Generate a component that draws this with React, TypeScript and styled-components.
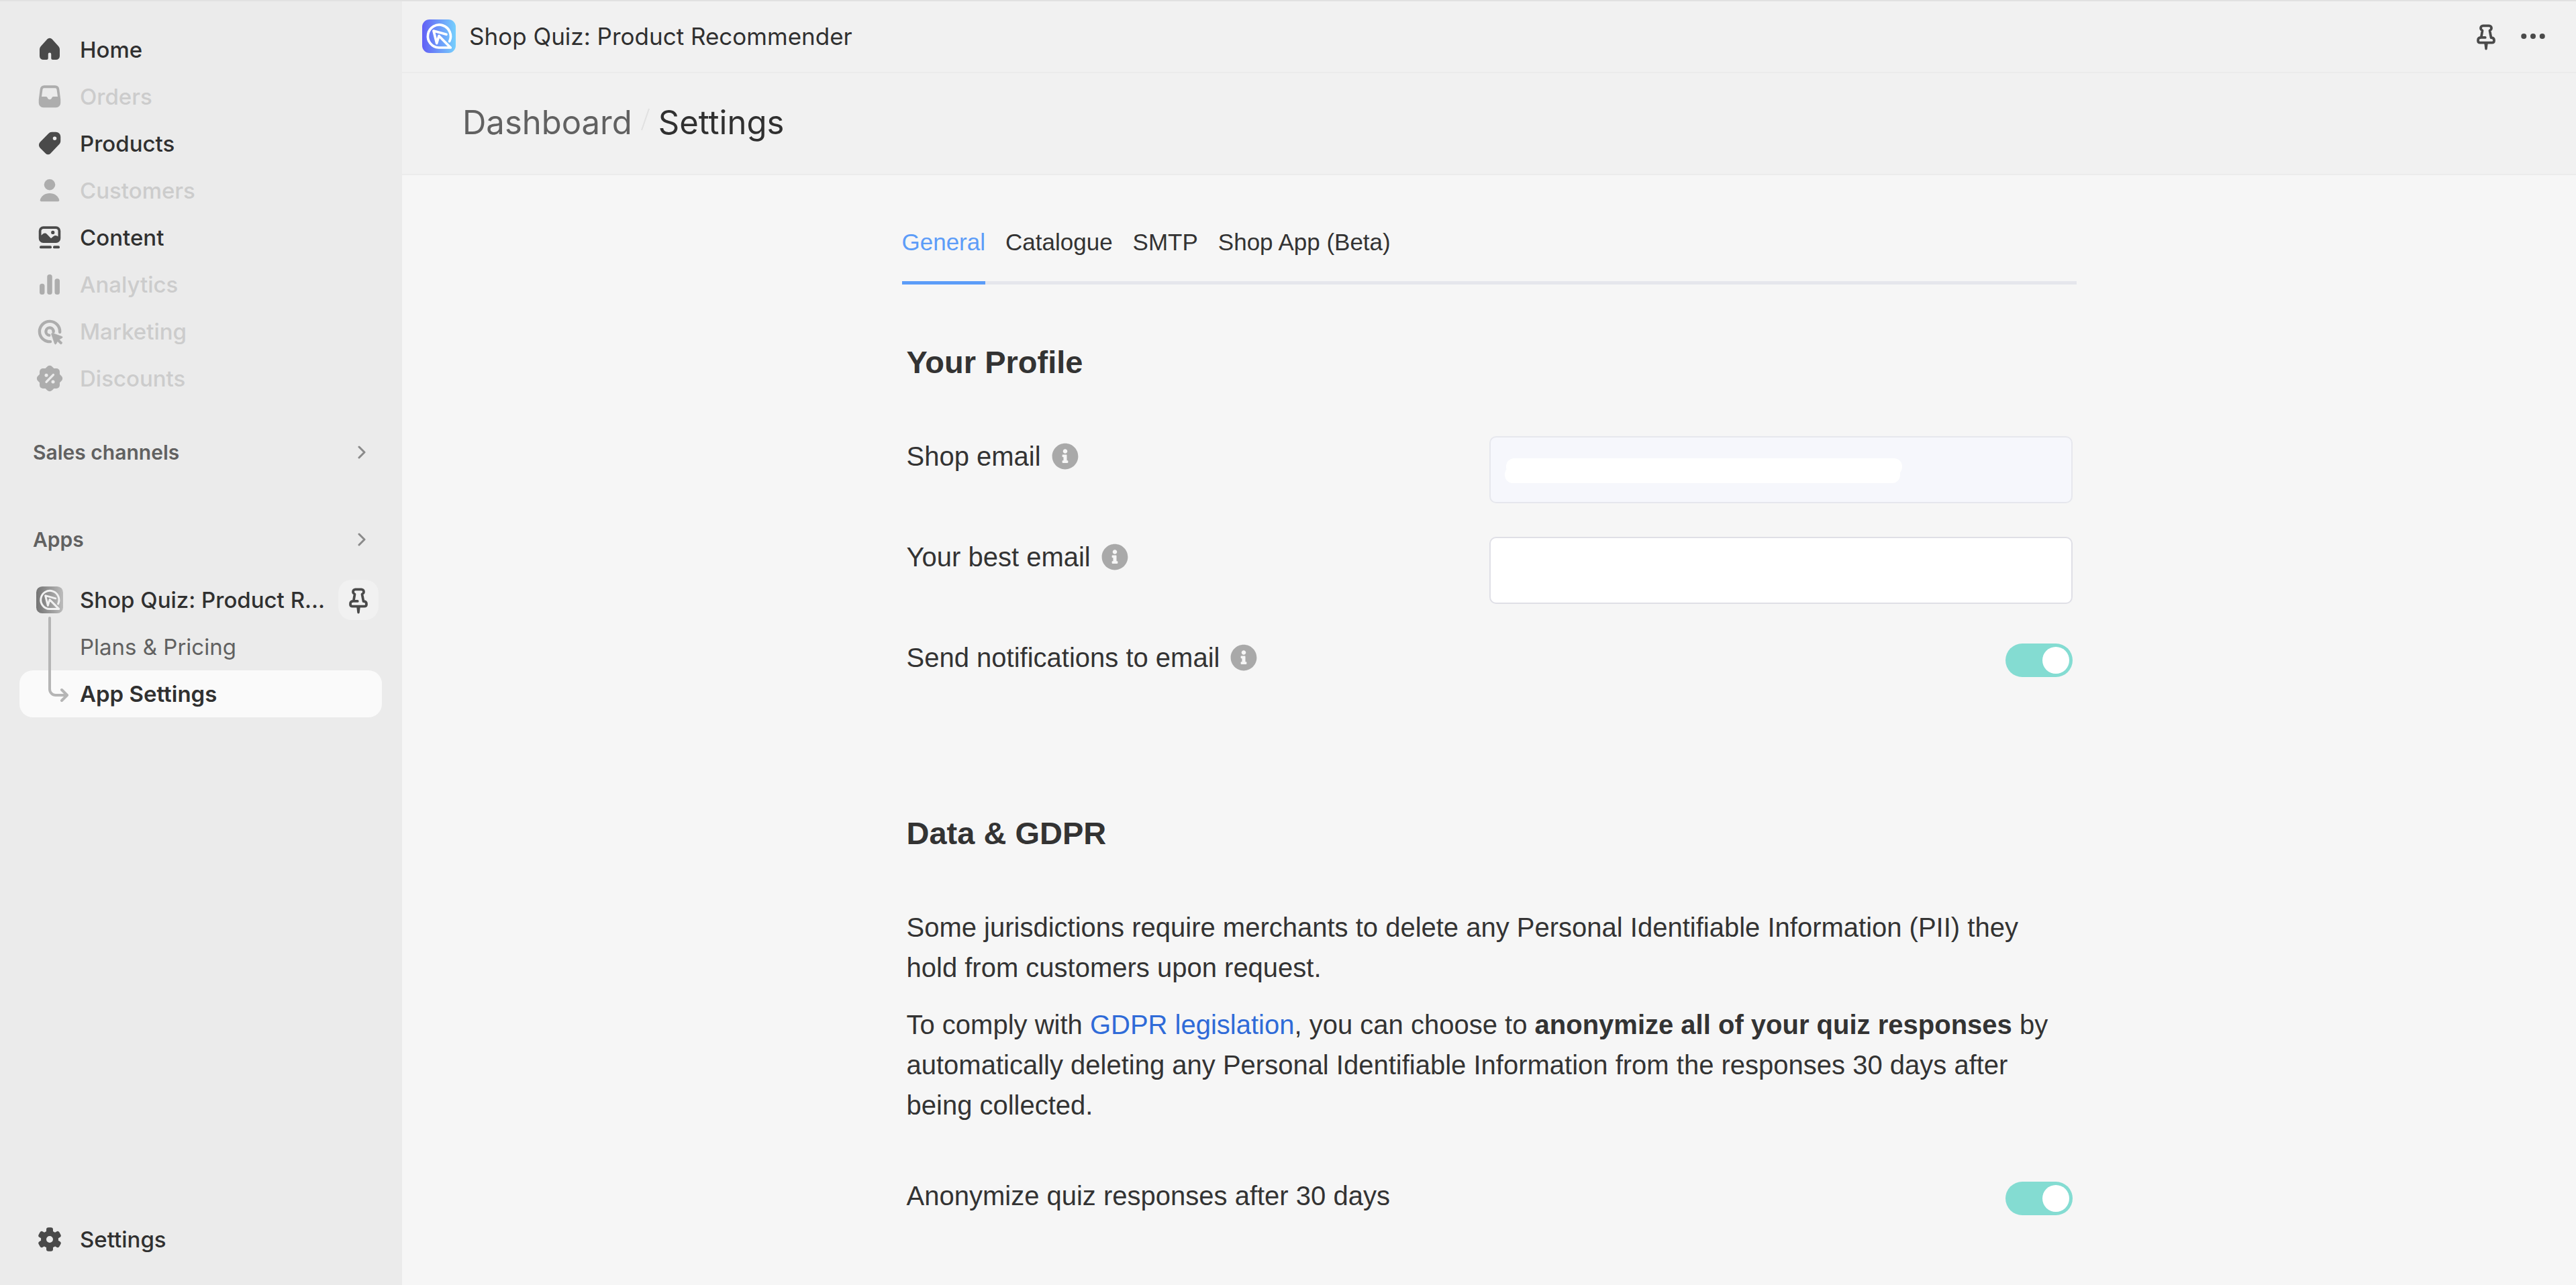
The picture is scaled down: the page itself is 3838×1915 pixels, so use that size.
import React, { useState } from "react";
import type { ReactNode } from "react";
import styled, { createGlobalStyle } from "styled-components";
import { FaInfoCircle } from "react-icons/fa";

const GlobalStyle = createGlobalStyle`
  *, *::before, *::after { box-sizing: border-box; }
  body { margin: 0; background: #f6f6f6; color: #303030; }
  a { text-decoration: none; }
  button { font: inherit; border: 0; background: none; padding: 0; cursor: pointer; }
`;

const ui = `Inter, "Noto Sans", sans-serif`;
const text = `"Liberation Sans", Arial, sans-serif`;

/* ---------- shell ---------- */

const Shell = styled.div`
  display: grid;
  grid-template-columns: 599px 1fr;
  min-height: 100vh;
  border-top: 2px solid #e1e1e1;
`;

const Sidebar = styled.aside`
  display: flex;
  flex-direction: column;
  padding: 37px 30px 33px 29px;
  background: #ebebeb;
  font-family: ${ui};
`;

const NavList = styled.ul<{ $top?: number }>`
  list-style: none;
  margin: ${(p) => p.$top ?? 0}px 0 0;
  padding: 0;
  position: relative;
`;

const NavRow = styled.li<{ $active?: boolean }>`
  display: flex;
  align-items: center;
  height: 70px;
  padding-left: 20px;
  padding-right: 5px;
  border-radius: 20px;
  background: ${(p) => (p.$active ? "#fafafa" : "transparent")};
`;

const NavLink = styled.a<{ $disabled?: boolean; $weight?: number; $indent?: boolean }>`
  display: flex;
  align-items: center;
  flex: 1;
  min-width: 0;
  gap: 20px;
  padding-left: ${(p) => (p.$indent ? 70 : 0)}px;
  color: ${(p) => (p.$disabled ? "#cccccc" : p.$weight === 400 ? "#616161" : "#303030")};
  font-size: 33px;
  font-weight: ${(p) => p.$weight ?? 500};
  line-height: 48px;
  white-space: nowrap;
  > svg {
    flex: none;
    color: ${(p) => (p.$disabled ? "#adadad" : "#4a4a4a")};
  }
`;

const SectionButton = styled.button<{ $top: number }>`
  display: flex;
  align-items: center;
  justify-content: space-between;
  height: 70px;
  margin-top: ${(p) => p.$top}px;
  padding: 0 24px 0 20px;
  color: #616161;
  font-size: 30px;
  font-weight: 600;
`;

const SidebarPin = styled.button`
  display: grid;
  place-items: center;
  flex: none;
  width: 60px;
  height: 60px;
  border-radius: 20px;
  background: #f1f1f1;
  color: #4a4a4a;
`;

const Branch = styled.svg`
  position: absolute;
  left: 40px;
  top: 59px;
  pointer-events: none;
`;

const SidebarFooter = styled.div`
  margin-top: auto;
`;

const Main = styled.main`
  min-width: 0;
`;

const TopBar = styled.header`
  display: flex;
  align-items: center;
  height: 107px;
  padding: 0 29px 2px 30px;
  border-bottom: 2px solid #ebebeb;
  background: #f1f1f1;
  font-family: ${ui};
`;

const AppTitle = styled.span`
  flex: 1;
  margin-left: 20px;
  font-size: 35px;
  font-weight: 400;
  line-height: 50px;
`;

const IconButton = styled.button`
  display: grid;
  place-items: center;
  width: 70px;
  height: 70px;
  color: #4a4a4a;
`;

const Crumbs = styled.nav`
  display: flex;
  align-items: center;
  gap: 13px;
  height: 152px;
  padding: 0 90px 2px;
  border-bottom: 2px solid #ebebeb;
  background: #f1f1f1;
  font-family: ${ui};
  font-size: 49px;
  line-height: 60px;
  font-weight: 400;
`;

const CrumbLink = styled.a`
  color: #616161;
`;

const CrumbCurrent = styled.span`
  color: #303030;
`;

/* ---------- settings page ---------- */

const Page = styled.div`
  max-width: 1750px;
  margin: 0 auto;
  padding: 70px 0 50px;
  color: #333333;
  font-family: ${text};
  font-size: 40px;
  line-height: 60px;
`;

const Tabs = styled.div`
  display: flex;
  gap: 30px;
  border-bottom: 5px solid #e5e6ec;
`;

const Tab = styled.button<{ $active: boolean }>`
  height: 93px;
  margin-bottom: -5px;
  padding-bottom: 28px;
  border-bottom: 5px solid ${(p) => (p.$active ? "#5c9cf8" : "transparent")};
  color: ${(p) => (p.$active ? "#5c9cf8" : "#333333")};
  font-size: 35px;
  line-height: 56px;
`;

const Section = styled.section<{ $top: number }>`
  padding: ${(p) => p.$top}px 6px 0 7px;
`;

const Heading = styled.h3`
  margin: 0 0 75px;
  font-size: 47px;
  font-weight: 700;
  line-height: 70px;
`;

const Field = styled.div`
  display: grid;
  grid-template-columns: 1fr 1fr;
  align-items: start;
  & + & {
    margin-top: 50px;
  }
`;

const LabelCell = styled.div`
  display: flex;
  align-items: center;
  gap: 16px;
  height: 60px;
`;

const InfoButton = styled.button`
  display: grid;
  place-items: center;
  color: #a9a9a9;
  font-size: 40px;
`;

const InputCell = styled.div`
  position: relative;
`;

const TextInput = styled.input`
  display: block;
  width: 100%;
  height: 100px;
  padding: 0 25px;
  border: 2px solid #dfdfe6;
  border-radius: 10px;
  background: #ffffff;
  color: #333333;
  font: 40px ${text};
  &:disabled {
    border-color: #e6e7ed;
    background: #f6f7fc;
  }
`;

const Redaction = styled.span`
  position: absolute;
  left: 23px;
  top: 33px;
  width: 592px;
  height: 37px;
  &::before,
  &::after {
    content: "";
    position: absolute;
    height: 25px;
    border-radius: 12px;
    background: #ffffff;
  }
  &::before { top: 0; left: 2px; right: 0; }
  &::after { bottom: 0; left: 0; right: 3px; }
`;

const Toggle = styled.input`
  appearance: none;
  justify-self: end;
  width: 100px;
  height: 50px;
  margin: 9px 0 0;
  padding: 5px;
  border-radius: 25px;
  background: #c9ccd4;
  cursor: pointer;
  &::before {
    content: "";
    display: block;
    width: 40px;
    height: 40px;
    border-radius: 50%;
    background: #ffffff;
  }
  &:checked { background: #84dcd2; }
  &:checked::before { margin-left: auto; }
`;

const Paragraph = styled.p`
  margin: 0 0 25px;
`;

const TextLink = styled.a`
  color: #2f6bd8;
`;

const FieldGroup = styled.div`
  padding-top: 50px;
`;

/* ---------- icons ---------- */

const Icon = ({ children }: { children: ReactNode }) => (
  <svg width="50" height="50" viewBox="0 0 20 20" fill="currentColor" aria-hidden="true">
    {children}
  </svg>
);

const HomeIcon = () => (
  <Icon>
    <path d="M8.6 3.7a1.9 1.9 0 0 1 2.8 0l3.7 4.1c.6.6.9 1.4.9 2.2v3.8A2.2 2.2 0 0 1 13.8 16h-1.9a1 1 0 0 1-1-1v-2.3a.9.9 0 0 0-1.8 0V15a1 1 0 0 1-1 1H6.2A2.2 2.2 0 0 1 4 13.8V10c0-.8.3-1.6.9-2.2z" />
  </Icon>
);

const OrdersIcon = () => (
  <Icon>
    <path
      fillRule="evenodd"
      d="M6.7 3.3h6.6a2.4 2.4 0 0 1 2.4 2.2l.8 6.2v2.1a2.7 2.7 0 0 1-2.7 2.7H6.2a2.7 2.7 0 0 1-2.7-2.7v-2.1l.8-6.2a2.4 2.4 0 0 1 2.4-2.2zm0 1.6a.9.9 0 0 0-.9.8L5.2 10h2.6c.5 0 .7.3.9.7.2.6.6 1 1.3 1s1.1-.4 1.3-1c.2-.4.4-.7.9-.7h2.6l-.6-4.3a.9.9 0 0 0-.9-.8z"
    />
  </Icon>
);

const ProductsIcon = () => (
  <Icon>
    <path
      fillRule="evenodd"
      d="M11.3 3.1h2.4a2.8 2.8 0 0 1 2.8 2.8v2.5c0 .8-.3 1.5-.8 2l-5.2 5.5a2 2 0 0 1-2.9 0L4.2 12.5a2.5 2.5 0 0 1 0-3.3L9.3 4a2.8 2.8 0 0 1 2-.9zM13 8a1.1 1.1 0 1 0 0-2.2A1.1 1.1 0 0 0 13 8z"
    />
  </Icon>
);

const CustomersIcon = () => (
  <Icon>
    <circle cx="10" cy="6.5" r="3.3" />
    <path d="M4.3 15.6c.6-2.4 2.9-4 5.7-4s5.1 1.6 5.7 4c.1.5-.2.9-.7.9H5c-.5 0-.8-.4-.7-.9z" />
  </Icon>
);

const ContentIcon = () => (
  <Icon>
    <path
      fillRule="evenodd"
      d="M6.2 3.3h7.6A2.7 2.7 0 0 1 16.5 6v4.5a2.7 2.7 0 0 1-2.7 2.7H6.2a2.7 2.7 0 0 1-2.7-2.7V6a2.7 2.7 0 0 1 2.7-2.7zm.1 1.5C5.5 4.8 5 5.3 5 6.1v2.6l1-.9c.7-.6 1.7-.6 2.3.1l2.5 2.6 1.4-1.2c.7-.6 1.6-.7 2.3-.2l.5.3V6.1c0-.8-.5-1.3-1.3-1.3zM11.9 8a1 1 0 1 0 0-2.1 1 1 0 0 0 0 2.1z"
    />
    <rect x="4" y="14.9" width="7.2" height="1.6" rx=".75" />
    <rect x="12" y="14.9" width="4" height="1.6" rx=".75" />
  </Icon>
);

const AnalyticsIcon = () => (
  <Icon>
    <rect x="4" y="9.5" width="3" height="6.5" rx="1.4" />
    <rect x="8.5" y="4" width="3" height="12" rx="1.4" />
    <rect x="13" y="6.5" width="3" height="9.5" rx="1.4" />
  </Icon>
);

const MarketingIcon = () => (
  <Icon>
    <g fill="none" stroke="currentColor" strokeWidth="1.75" strokeLinecap="round">
      <path d="M16.05 10.4A6.05 6.05 0 1 0 10.4 16.05" />
      <path d="M12.25 10.2A2.25 2.25 0 1 0 9.7 12.25" />
    </g>
    <path
      d="M11.1 11.7 13 17.3c.1.4.6.4.8.1l.9-1.6 1.5 1.5c.3.3.7.3 1 0s.3-.7 0-1l-1.5-1.5 1.7-1c.3-.2.3-.7-.1-.8L11.7 11a.5.5 0 0 0-.6.7z"
      stroke="currentColor"
      strokeWidth=".3"
    />
  </Icon>
);

const DiscountsIcon = () => (
  <Icon>
    <rect x="4" y="4" width="12" height="12" rx="2" />
    <rect x="4" y="4" width="12" height="12" rx="2" transform="rotate(45 10 10)" />
    <g fill="#ebebeb">
      <circle cx="8" cy="8.1" r="1" />
      <circle cx="12" cy="12" r="1" />
    </g>
    <path d="M12.2 7.8 8 12.1" stroke="#ebebeb" strokeWidth="1.3" strokeLinecap="round" />
  </Icon>
);

const GearIcon = () => (
  <Icon>
    <circle cx="10" cy="10" r="3.6" fill="none" stroke="currentColor" strokeWidth="3.2" />
    {[0, 60, 120, 180, 240, 300].map((a) => (
      <rect
        key={a}
        x="8"
        y="2.9"
        width="4"
        height="4.6"
        rx="1.3"
        transform={`rotate(${a} 10 10)`}
      />
    ))}
  </Icon>
);

const PinIcon = () => (
  <Icon>
    <g
      fill="none"
      stroke="currentColor"
      strokeWidth="1.5"
      strokeLinecap="round"
      strokeLinejoin="round"
    >
      <path d="M9.5 10.75H7.1l.7-4.1C7.1 6.2 6.8 5.7 6.8 5.2v-.1c0-.8.6-1.4 1.4-1.4h3.6c.8 0 1.4.6 1.4 1.4v.1c0 .5-.3 1-1 1.45l.8 4.2c1.2 0 1.8.6 1.8 1.5v.2c0 .8-.5 1.3-1.3 1.3h-7c-.8 0-1.3-.5-1.3-1.3v-.2c0-1 .6-1.6 1.9-1.6" />
    </g>
    <path d="M8.9 14.2h2.2l-.4 3.3a.7.7 0 0 1-1.4 0z" />
  </Icon>
);

const DotsIcon = () => (
  <Icon>
    <circle cx="4.5" cy="10" r="1.6" />
    <circle cx="10" cy="10" r="1.6" />
    <circle cx="15.5" cy="10" r="1.6" />
  </Icon>
);

const ChevronIcon = () => (
  <svg width="12" height="24" viewBox="0 0 12 24" fill="none" aria-hidden="true">
    <path
      d="M2 4 10 12l-8 8"
      stroke="#8a8a8a"
      strokeWidth="3"
      strokeLinecap="round"
      strokeLinejoin="round"
    />
  </svg>
);

const AppLogo = ({ mono }: { mono?: boolean }) => {
  const id = mono ? "logo-mono" : "logo-color";
  /* the grey sidebar variant keeps a margin round the tile */
  const viewBox = mono ? "-6.25 -6.25 62.5 62.5" : "0 0 50 50";
  return (
    <svg width="50" height="50" viewBox={viewBox} aria-hidden="true">
      <defs>
        <linearGradient id={id} x1="0" y1="0" x2="1" y2="0">
          <stop offset="0" stopColor={mono ? "#737373" : "#625ef5"} />
          <stop offset="1" stopColor={mono ? "#bcbcbc" : "#76d0fd"} />
        </linearGradient>
      </defs>
      <rect width="50" height="50" rx="11" fill={`url(#${id})`} />
      <path
        d="M40.7 32.5A17 17 0 1 0 24.7 42H42.3L25 24.5 21.7 35.5 17 17l19 5.3"
        fill="none"
        stroke={mono ? "#f1f1f1" : "#ffffff"}
        strokeWidth="3.7"
        strokeLinecap="round"
        strokeLinejoin="round"
      />
    </svg>
  );
};

/* ---------- data ---------- */

const primaryNav = [
  { label: "Home", icon: <HomeIcon /> },
  { label: "Orders", icon: <OrdersIcon />, disabled: true },
  { label: "Products", icon: <ProductsIcon /> },
  { label: "Customers", icon: <CustomersIcon />, disabled: true },
  { label: "Content", icon: <ContentIcon /> },
  { label: "Analytics", icon: <AnalyticsIcon />, disabled: true },
  { label: "Marketing", icon: <MarketingIcon />, disabled: true },
  { label: "Discounts", icon: <DiscountsIcon />, disabled: true },
];

const tabs = ["General", "Catalogue", "SMTP", "Shop App (Beta)"];

const FieldLabel = ({ id, label, info }: { id: string; label: string; info?: boolean }) => (
  <LabelCell>
    <label htmlFor={id}>{label}</label>
    {info && (
      <InfoButton type="button" aria-label={`About ${label}`}>
        <FaInfoCircle />
      </InfoButton>
    )}
  </LabelCell>
);

export default function App() {
  const [tab, setTab] = useState(tabs[0]);

  return (
    <>
      <GlobalStyle />
      <Shell>
        <Sidebar>
          <NavList>
            {primaryNav.map((item) => (
              <NavRow key={item.label}>
                <NavLink href="#" $disabled={item.disabled} aria-disabled={item.disabled}>
                  {item.icon}
                  <span>{item.label}</span>
                </NavLink>
              </NavRow>
            ))}
          </NavList>

          <SectionButton type="button" $top={40}>
            Sales channels
            <ChevronIcon />
          </SectionButton>
          <SectionButton type="button" $top={60}>
            Apps
            <ChevronIcon />
          </SectionButton>

          <NavList $top={20}>
            <NavRow>
              <NavLink href="#">
                <AppLogo mono />
                <span>Shop Quiz: Product R...</span>
              </NavLink>
              <SidebarPin type="button" aria-label="Unpin app">
                <PinIcon />
              </SidebarPin>
            </NavRow>
            <NavRow>
              <NavLink href="#" $indent $weight={400}>
                <span>Plans &amp; Pricing</span>
              </NavLink>
            </NavRow>
            <NavRow $active>
              <NavLink href="#" $indent $weight={600} aria-current="page">
                <span>App Settings</span>
              </NavLink>
            </NavRow>
            <Branch width="36" height="132" viewBox="0 0 36 132" fill="none" aria-hidden="true">
              <path
                d="M5 3v106a9 9 0 0 0 9 9h16M23 110l8 8-8 8"
                stroke="#b5b5b5"
                strokeWidth="4"
                strokeLinecap="round"
                strokeLinejoin="round"
              />
            </Branch>
          </NavList>

          <SidebarFooter>
            <NavList>
              <NavRow>
                <NavLink href="#">
                  <GearIcon />
                  <span>Settings</span>
                </NavLink>
              </NavRow>
            </NavList>
          </SidebarFooter>
        </Sidebar>

        <Main>
          <TopBar>
            <AppLogo />
            <AppTitle>Shop Quiz: Product Recommender</AppTitle>
            <IconButton type="button" aria-label="Pin app">
              <PinIcon />
            </IconButton>
            <IconButton type="button" aria-label="More actions">
              <DotsIcon />
            </IconButton>
          </TopBar>

          <Crumbs aria-label="Breadcrumb">
            <CrumbLink href="#">Dashboard</CrumbLink>
            <svg width="13" height="44" viewBox="0 0 13 44" fill="none" aria-hidden="true">
              <path d="M12 1 1 33" stroke="#e1e1e1" strokeWidth="2" />
            </svg>
            <CrumbCurrent>Settings</CrumbCurrent>
          </Crumbs>

          <Page>
            <Tabs role="tablist">
              {tabs.map((name) => (
                <Tab
                  key={name}
                  type="button"
                  role="tab"
                  aria-selected={tab === name}
                  $active={tab === name}
                  onClick={() => setTab(name)}
                >
                  {name}
                </Tab>
              ))}
            </Tabs>

            <Section $top={81}>
              <Heading>Your Profile</Heading>
              <Field>
                <FieldLabel id="shop-email" label="Shop email" info />
                <InputCell>
                  <TextInput id="shop-email" type="email" disabled />
                  <Redaction />
                </InputCell>
              </Field>
              <Field>
                <FieldLabel id="best-email" label="Your best email" info />
                <TextInput id="best-email" type="email" />
              </Field>
              <Field>
                <FieldLabel id="notify" label="Send notifications to email" info />
                <Toggle id="notify" type="checkbox" defaultChecked />
              </Field>
            </Section>

            <Section $top={197}>
              <Heading>Data &amp; GDPR</Heading>
              <Paragraph>
                Some jurisdictions require merchants to delete any Personal Identifiable Information
                (PII) they hold from customers upon request.
              </Paragraph>
              <Paragraph>
                To comply with <TextLink href="#">GDPR legislation</TextLink>, you can choose to{" "}
                <b>anonymize all of your quiz responses</b> by automatically deleting any Personal
                Identifiable Information from the responses 30 days after being collected.
              </Paragraph>
              <FieldGroup>
                <Field>
                  <FieldLabel id="anonymize" label="Anonymize quiz responses after 30 days" />
                  <Toggle id="anonymize" type="checkbox" defaultChecked />
                </Field>
              </FieldGroup>
            </Section>
          </Page>
        </Main>
      </Shell>
    </>
  );
}
